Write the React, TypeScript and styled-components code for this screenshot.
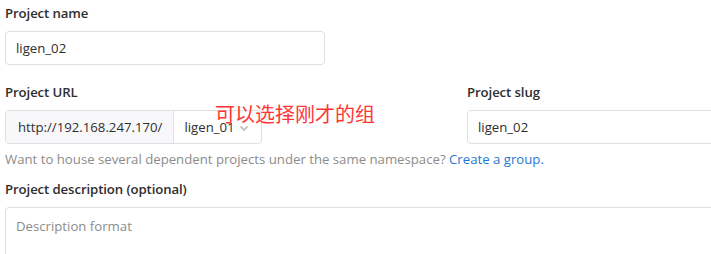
import React from "react";
import styled, { createGlobalStyle } from "styled-components";

const Global = createGlobalStyle`
  html, body { margin: 0; padding: 0; background: #fff; }
  body {
    font-family: "Open Sans", "Noto Sans", "Liberation Sans", "Noto Sans CJK SC", sans-serif;
    color: #2e2e2e;
    overflow: hidden;
  }
  * { box-sizing: border-box; }
`;

const Page = styled.div`
  position: relative;
  width: 711px;
  height: 254px;
  padding: 3px 0 0 5px;
  overflow: hidden;
`;

const Group = styled.div<{ $mb?: number; $mt?: number }>`
  display: flex;
  flex-direction: column;
  margin-top: ${(p) => p.$mt ?? 0}px;
  margin-bottom: ${(p) => p.$mb ?? 16}px;
`;

const Label = styled.label`
  font-size: 13.2px;
  font-weight: 600;
  color: #2e2e2e;
  line-height: 20px;
  margin-bottom: 8px;
  letter-spacing: -0.1px;
`;

const Input = styled.div<{ $w?: string }>`
  width: ${(p) => p.$w ?? "100%"};
  height: 34px;
  border: 1px solid #dfdfdf;
  border-radius: 4px;
  padding: 0 10px;
  display: flex;
  align-items: center;
  font-size: 13.2px;
  color: #2e2e2e;
  background: #fff;
`;

const Row = styled.div`
  display: flex;
  gap: 15px;
`;

const Col = styled.div<{ $w?: string }>`
  display: flex;
  flex-direction: column;
  ${(p) => (p.$w ? `width: ${p.$w};` : "flex: 1;")}
`;

const InputGroup = styled.div`
  display: flex;
  width: 257px;
  height: 34px;
  border: 1px solid #dfdfdf;
  border-radius: 4px;
  overflow: hidden;
`;

const Addon = styled.div`
  display: flex;
  align-items: center;
  padding: 0 11px 0 12px;
  background: #f8f8fa;
  border-right: 1px solid #dfdfdf;
  font-size: 13.2px;
  color: #2e2e2e;
  white-space: nowrap;
`;

const Select = styled.div`
  flex: 1;
  display: flex;
  align-items: center;
  padding: 0 0 0 10px;
  font-size: 13.2px;
  color: #2e2e2e;
  gap: 3px;
`;

const Help = styled.div`
  font-size: 13.2px;
  color: #8c8c8c;
  line-height: 20px;
  margin-top: 5px;
  white-space: nowrap;
`;

const Link = styled.a`
  color: #1f78d1;
  text-decoration: none;
`;

const TextArea = styled.div`
  width: 720px;
  height: 80px;
  border: 1px solid #dfdfdf;
  border-radius: 4px;
  padding: 8px 10px;
  font-size: 13.2px;
  line-height: 20px;
  color: #8c8c8c;
`;

const Annotation = styled.div`
  position: absolute;
  left: 215px;
  top: 101px;
  font-family: "Noto Sans CJK SC", sans-serif;
  font-size: 20px;
  line-height: 26px;
  color: #ff3636;
`;

const Chevron = () => (
  <svg width="12" height="12" viewBox="0 0 12 12" style={{ marginTop: 2 }}>
    <path d="M2.5 4.5 L6 8 L9.5 4.5" fill="none" stroke="#c4c4c4" strokeWidth="1.8" />
  </svg>
);

export default function App() {
  return (
    <>
      <Global />
      <Page>
        <Group $mb={17}>
          <Label>Project name</Label>
          <Input $w="320px">ligen_02</Input>
        </Group>
        <Row>
          <Col $w="447px">
            <Label>Project URL</Label>
            <InputGroup>
              <Addon>http://192.168.247.170/</Addon>
              <Select>
                ligen_01
                <Chevron />
              </Select>
            </InputGroup>
            <Help>
              Want to house several dependent projects under the same namespace?{" "}
              <Link>Create a group.</Link>
            </Help>
          </Col>
          <Col>
            <Label>Project slug</Label>
            <Input $w="260px">ligen_02</Input>
          </Col>
        </Row>
        <Group $mb={0} $mt={10}>
          <Label>Project description (optional)</Label>
          <TextArea>Description format</TextArea>
        </Group>
        <Annotation>可以选择刚才的组</Annotation>
      </Page>
    </>
  );
}
